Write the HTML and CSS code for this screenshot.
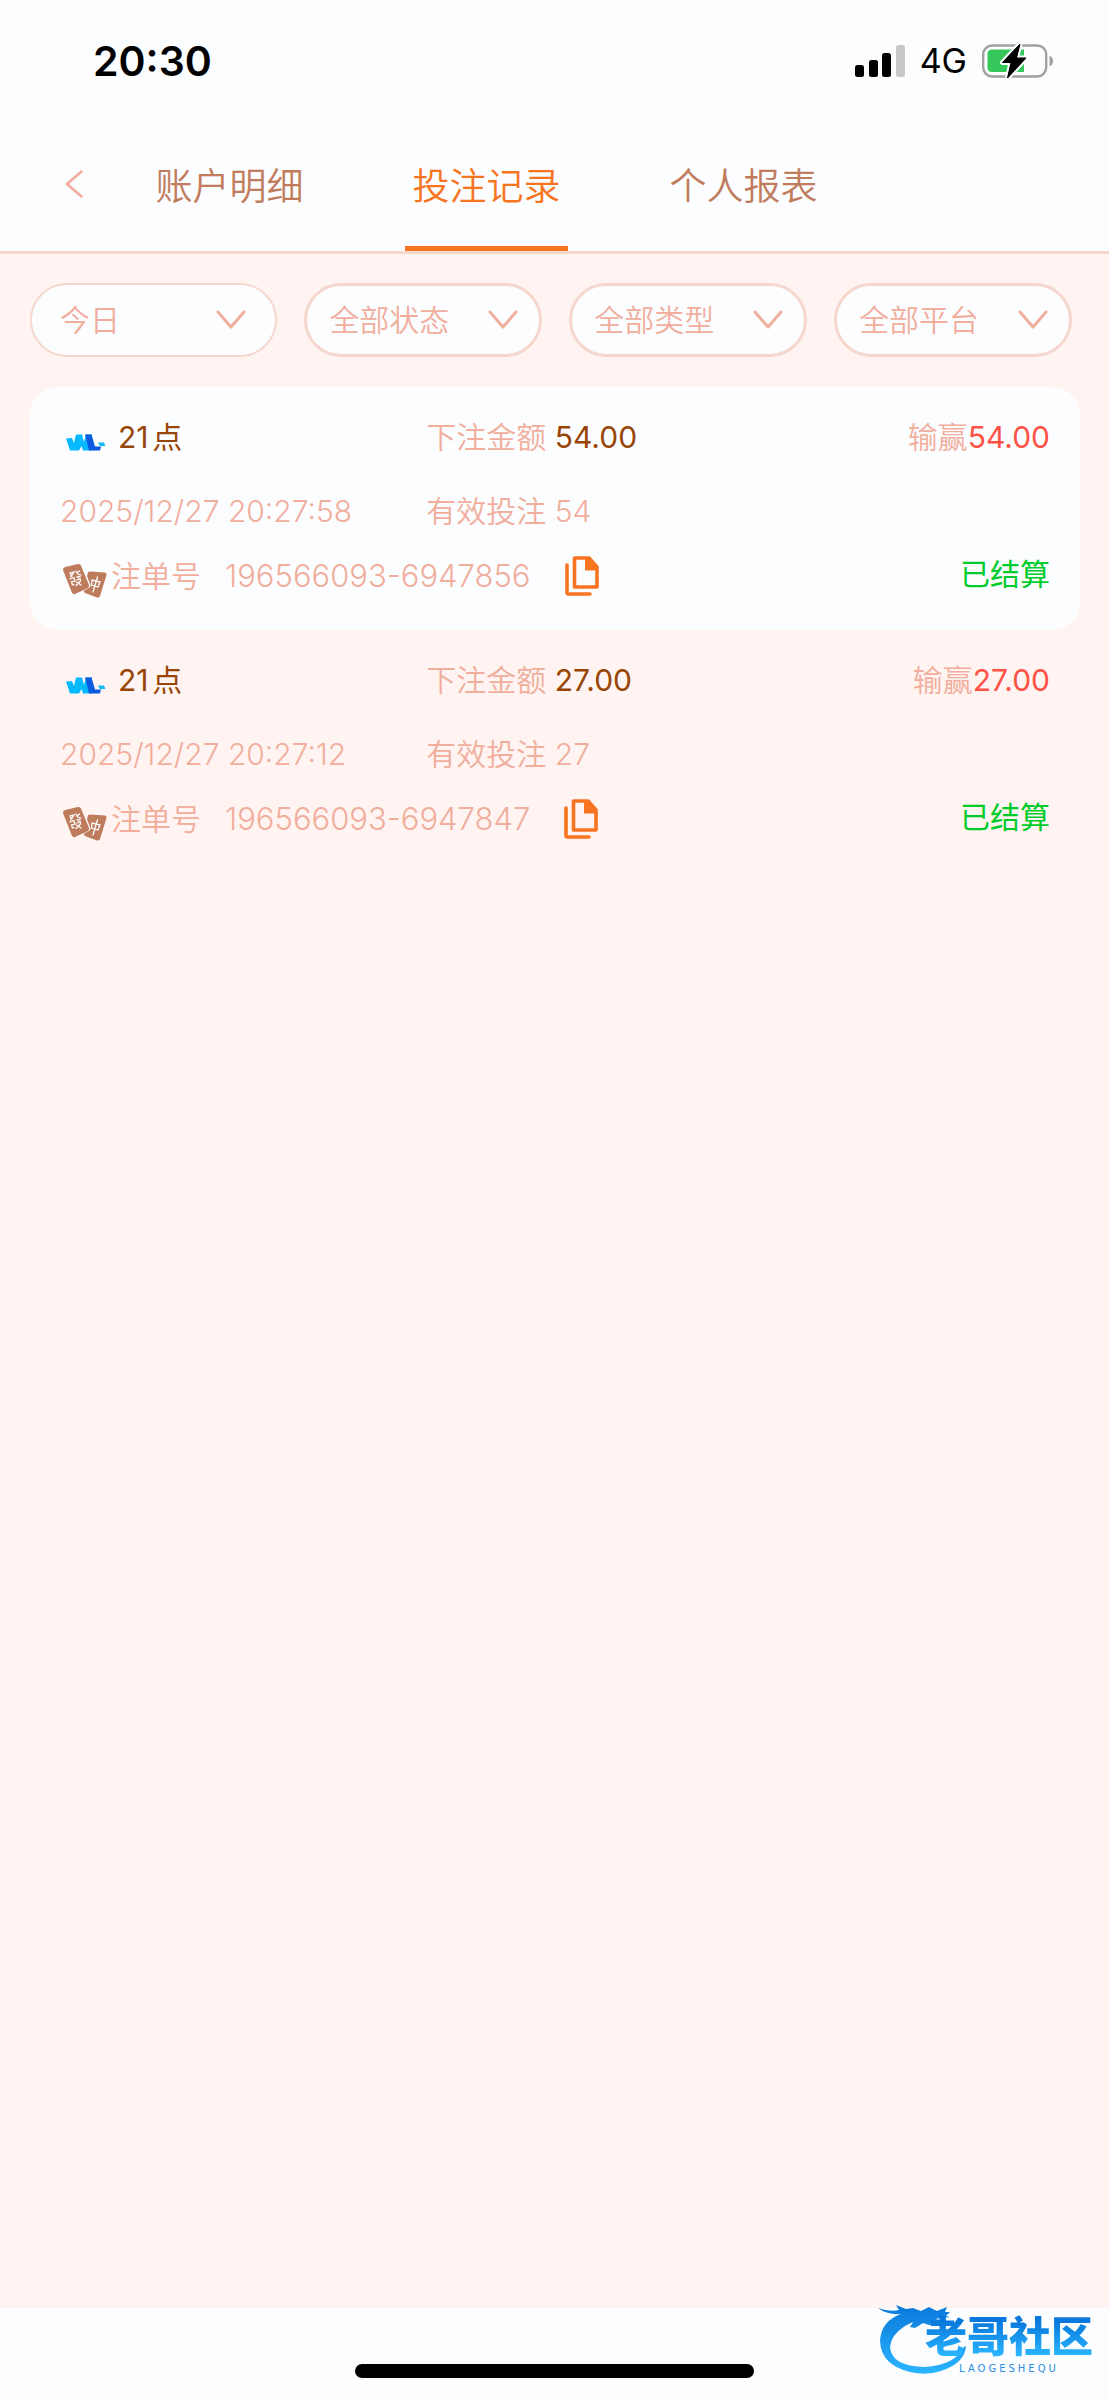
FILE: index.html
```html
<!DOCTYPE html>
<html lang="zh-CN">
<head>
<meta charset="utf-8">
<meta name="viewport" content="width=device-width, initial-scale=1">
<title>投注记录</title>
<link rel="stylesheet" href="styles.css">
</head>
<body>
<svg class="sprite" aria-hidden="true">
  <symbol id="chevron" viewBox="0 0 30 20"><path d="M2 2 15 17 28 2" fill="none" stroke="currentColor" stroke-width="3" stroke-linecap="round" stroke-linejoin="round"/></symbol>
  <symbol id="wl" viewBox="0 0 40 17">
    <path d="M0 4.500 6 4 8 9 10 .5H16L18 8 20 .5H26V16.500H17L15.500 12 13 16.500H4Z" fill="#04b9ff"/>
    <path d="M19 .5H25.500L29 12.500H35L34 16.500H23Z" fill="#0a5be0"/>
    <path d="M32 8.500H38L39.500 12H34Z" fill="#12b9f5"/>
  </symbol>
  <symbol id="tiles" viewBox="0 0 46 36">
    <path d="M3 4 16 1Q18 .6 19 2.500L27 22Q27.600 24 26 25L13 31Q11 31.600 10 30L1 7Q.6 4.800 3 4Z" fill="#bf7c5d"/>
    <path d="M26 9.500Q26.500 8.400 28 8.500L43 9.500Q45 10 44.500 12L38 33Q37 35 35 34.500L23 30Q21.500 29 22 27.500L27 25Q29 24 28.400 22L25 13Z" fill="#bf7c5d"/>
    <g fill="none" stroke="#fcfdff" stroke-width="1.300" stroke-linecap="round">
      <path d="M8 10 12 9 8.500 14M8.500 11.500 10 13M14 8 15.500 11 19 12M17.500 8 15 10M8 16 12 14.500M15 14 18 13.500M12 15 13 18 9.500 19 10.500 22 12 21.500M15 17 18 15.500 18.500 18M14.500 19 19 22M18 18.500 14 22.500"/>
      <path d="M30 17 38 19 36 24 29.500 22ZM35.500 14 31 29"/>
    </g>
  </symbol>
  <symbol id="copy" viewBox="0 0 34 40">
    <path d="M2 9V36.500Q2 38 3.500 38H25" fill="none" stroke="currentColor" stroke-width="3.600" stroke-linecap="round"/>
    <path d="M9.500 2H24L32 11V31H9.500Z" fill="none" stroke="currentColor" stroke-width="3.600" stroke-linejoin="round"/>
    <path d="M20 2H24L32 11V14.500H20Z" fill="currentColor"/>
  </symbol>
</svg>

<header class="top">
  <div class="status">
    <time class="clock">20:30</time>
    <div class="signals">
      <svg class="bars" viewBox="0 0 50 32" aria-hidden="true">
        <rect x="0" y="20" width="9" height="12" rx="2.500"/><rect x="14" y="15" width="9" height="17" rx="2.500"/><rect x="27" y="8" width="9" height="24" rx="2.500"/><rect x="41" y="0" width="9" height="32" rx="2.500" fill="#c8c9cb"/>
      </svg>
      <span class="network">4G</span>
      <svg class="battery" viewBox="0 0 72 34" aria-hidden="true">
        <rect x="1.200" y="1.500" width="63" height="31" rx="9" fill="none" stroke="#a0a1a3" stroke-width="2.400"/>
        <path d="M67.500 11.500Q71 13 71 17T67.500 22.500Z" fill="#a0a1a3"/>
        <path d="M10 5.500H42V28H10Q5.500 28 5.500 23.500V10Q5.500 5.500 10 5.500Z" fill="#35c759"/>
        <path d="M38 0 20.500 18.500H29L25.500 34 44 14H34.500Z" fill="#000" stroke="#fcfdff" stroke-width="5" stroke-linejoin="round" paint-order="stroke"/>
        <path d="M38 0 20.500 18.500H29L25.500 34 44 14H34.500Z" stroke="#000" stroke-linejoin="round"/>
      </svg>
    </div>
  </div>
  <nav class="tabs">
    <button class="back" type="button" aria-label="返回"><svg viewBox="0 0 18 28"><path d="M16.500 1.500 2 14 16.500 26.500" fill="none" stroke="currentColor" stroke-width="2.500" stroke-linecap="round" stroke-linejoin="round"/></svg></button>
    <a class="tab" href="#account">账户明细</a>
    <a class="tab tab-active" href="#bets" aria-current="page">投注记录</a>
    <a class="tab" href="#report">个人报表</a>
  </nav>
</header>

<main class="content">
  <form class="filters">
    <div class="filter filter-date"><select aria-label="日期"><option>今日</option></select><svg><use href="#chevron"/></svg></div>
    <div class="filter"><select aria-label="状态"><option>全部状态</option></select><svg><use href="#chevron"/></svg></div>
    <div class="filter"><select aria-label="类型"><option>全部类型</option></select><svg><use href="#chevron"/></svg></div>
    <div class="filter"><select aria-label="平台"><option>全部平台</option></select><svg><use href="#chevron"/></svg></div>
  </form>

  <ul class="bets">
    <li class="bet">
      <div class="row">
        <div class="game"><svg class="logo"><use href="#wl"/></svg><span>21点</span></div>
        <div class="amount">下注金额 <span class="strong">54.00</span></div>
        <div class="result">输赢<span class="win">54.00</span></div>
      </div>
      <div class="row">
        <time>2025/12/27 20:27:58</time>
        <div>有效投注 54</div>
      </div>
      <div class="order">
        <svg class="tiles"><use href="#tiles"/></svg><span>注单号</span><span class="number">196566093-6947856</span>
        <button class="copy" type="button" aria-label="复制"><svg><use href="#copy"/></svg></button>
        <span class="settled">已结算</span>
      </div>
    </li>
    <li class="bet">
      <div class="row">
        <div class="game"><svg class="logo"><use href="#wl"/></svg><span>21点</span></div>
        <div class="amount">下注金额 <span class="strong">27.00</span></div>
        <div class="result">输赢<span class="win">27.00</span></div>
      </div>
      <div class="row">
        <time>2025/12/27 20:27:12</time>
        <div>有效投注 27</div>
      </div>
      <div class="order">
        <svg class="tiles"><use href="#tiles"/></svg><span>注单号</span><span class="number">196566093-6947847</span>
        <button class="copy" type="button" aria-label="复制"><svg><use href="#copy"/></svg></button>
        <span class="settled">已结算</span>
      </div>
    </li>
  </ul>
</main>

<footer class="bottom">
  <div class="home"></div>
  <div class="brand">
    <svg class="dragon" viewBox="0 0 92 72" aria-hidden="true">
      <defs><linearGradient id="blue" x1="0" y1="0" x2="0" y2="1"><stop offset="0" stop-color="#0a78da"/><stop offset="1" stop-color="#2bb5ff"/></linearGradient></defs>
      <path d="M1 5Q12 9 22 7L19 2 29 6 36 5 44 8 52 4 60 8 70 4 68 9 73 9 69 13 73 14 64 15 58 16 70 18 71 22 60 20 52 22 46 20 38 25 33 24 36 19 28 23Q14 32 13 44Q14 63 48 64Q78 62 87 44L89 43Q88 60 64 68Q49 73 33 69Q4 62 3 38Q4 18 24 11Q10 12 1 5Z" fill="url(#blue)"/>
    </svg>
    <div class="brand-text"><span class="brand-name">老哥社区</span><span class="brand-latin">LAOGESHEQU</span></div>
  </div>
</footer>
</body>
</html>
```
FILE: styles.css
```css
* { box-sizing: border-box; }

body {
  margin: 0;
  min-height: 100vh;
  display: flex;
  flex-direction: column;
  background: #fff4f1;
  color: #f1ae9d;
  font: 350 30px/44px Inter, "Noto Sans CJK SC", sans-serif;
}

button { padding: 0; border: 0; background: none; color: inherit; font: inherit; }
svg { display: block; }
.sprite { position: absolute; width: 0; height: 0; }

.top { background: #fcfdff; border-bottom: 3px solid #f6d7ce; }

.status {
  display: flex;
  justify-content: space-between;
  align-items: center;
  height: 122px;
  padding: 0 55px 0 93px;
  color: #000;
}
.clock { font-size: 41px; font-weight: 600; }
.signals { display: flex; align-items: center; }
.bars { width: 50px; height: 32px; }
.network { margin: 0 15px; font-size: 34px; font-weight: 400; }
.battery { width: 72px; height: 34px; }

.tabs { display: flex; height: 129px; padding-left: 65px; }
.back { width: 83px; padding-bottom: 6px; color: #f2ab9c; }
.back svg { width: 18px; height: 28px; }
.tab {
  width: 163px;
  margin-right: 94px;
  border-bottom: 5px solid transparent;
  color: #c07c5c;
  font-size: 37px;
  line-height: 130px;
  text-align: center;
  text-decoration: none;
  white-space: nowrap;
}
.tab-active { border-color: #f77421; color: #f77421; }

.content { flex: 1; padding: 29px 29px 0 30px; }

.filters {
  display: grid;
  grid-template-columns: 104fr 100fr 100fr 100fr;
  gap: 27px;
  padding-right: 8px;
}
.filter { display: grid; align-items: center; }
.filter > * { grid-area: 1 / 1; }
.filter select {
  width: 100%;
  height: 74px;
  padding: 0 60px 0 22px;
  border: 3px solid #f6d7ce;
  border-radius: 37px;
  appearance: none;
  background: #fcfdff;
  color: inherit;
  font: inherit;
}
.filter svg {
  justify-self: end;
  width: 30px;
  height: 20px;
  margin-right: 24px;
  pointer-events: none;
}
.filter-date select { border-width: 2px; padding-left: 28px; }
.filter-date svg { margin-right: 31px; }

.bets { margin: 30px 0 0; padding: 0; list-style: none; }
.bet { padding: 28px 30px 32px; border-radius: 28px; }
.bet:nth-child(odd) { background: #fcfdff; }
.row { display: grid; grid-template-columns: 37% 1fr auto; white-space: nowrap; }
.row:first-child { margin-bottom: 30px; }
.game { display: flex; align-items: center; gap: 12px; padding-left: 6px; color: #984607; font-weight: 400; text-autospace: normal; }
.logo { width: 40px; height: 17px; margin-top: 10px; }
.strong { color: #984607; font-weight: 400; }
.win { color: #ff5246; font-weight: 400; }

.order { display: flex; align-items: center; height: 44px; margin-top: 21px; white-space: nowrap; }
.tiles { width: 46px; height: 36px; margin: 9px 3px 0 2px; }
.number { margin-left: 24px; font-size: 31px; }
.copy { margin-left: 34px; color: #f77421; }
.copy svg { width: 34px; height: 40px; }
.settled { margin-left: auto; padding-bottom: 5px; color: #00cc2c; font-weight: 400; }

.bottom {
  position: relative;
  display: flex;
  justify-content: center;
  align-items: flex-end;
  height: 92px;
  padding-bottom: 22px;
  background: #fcfdff;
}
.home { width: 36%; height: 14px; border-radius: 7px; background: #000; }
.brand { position: absolute; right: 16px; bottom: 25px; display: flex; align-items: flex-end; }
.dragon { width: 92px; height: 72px; }
.brand-text { display: flex; flex-direction: column; margin-left: -44px; }
.brand-name {
  background: linear-gradient(#0878dc 20%, #2bb5ff 85%);
  background-clip: text;
  color: transparent;
  font-size: 42px;
  font-weight: 900;
  line-height: 52px;
}
.brand-latin {
  color: #2a8fe0;
  font: 10px/12px "DejaVu Sans", sans-serif;
  letter-spacing: 3px;
  text-align: center;
}
```
